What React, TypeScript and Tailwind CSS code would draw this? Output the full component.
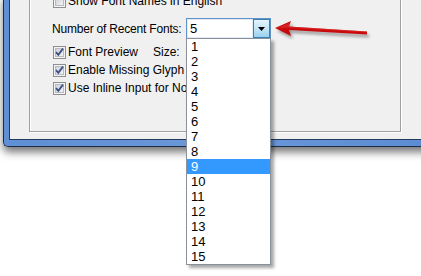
import React from "react";

const FONT = "font-['Liberation_Sans',Arial,sans-serif]";

function CheckBox({ checked }: { checked?: boolean }) {
    return (
        <svg width="13" height="13" viewBox="0 0 13 13" className="shrink-0">
            <defs>
                <linearGradient id={checked ? "cbg1" : "cbg0"} x1="0" y1="0" x2="1" y2="1">
                    <stop offset="0" stopColor="#cbcfd5" />
                    <stop offset="1" stopColor="#f6f6f6" />
                </linearGradient>
            </defs>
            <rect x="0.5" y="0.5" width="12" height="12" fill="#f4f4f4" stroke="#8e8f8f" />
            <rect x="2.5" y="2.5" width="8" height="8" fill={`url(#${checked ? "cbg1" : "cbg0"})`} stroke="#b8bcc2" />
            {checked && (
                <path d="M3 6.2 L5.3 8.8 L10 2.6" fill="none" stroke="#3a4f86" strokeWidth="1.8" />
            )}
        </svg>
    );
}

// rows are clipped where the open list covers them (x = 186)
function CheckRow({ label, checked, className }: { label: string; checked?: boolean; className?: string }) {
    return (
        <div className={`flex items-center w-[133px] h-[13px] overflow-hidden whitespace-nowrap ${className ?? ""}`}>
            <CheckBox checked={checked} />
            <span className="ml-[2px] text-[12px] leading-[13px] text-black">{label}</span>
        </div>
    );
}

const ITEMS = Array.from({ length: 15 }, (_, i) => i + 1);

export default function App() {
    return (
        <div className={`relative w-[421px] h-[276px] bg-white overflow-hidden ${FONT}`}>
            {/* Dialog window (bottom-left corner visible) */}
            <div className="ml-[3px] w-[440px] h-[152px] border-l border-b border-[#1c2d4a] bg-gradient-to-r from-[#5f8fd4] via-[#6b98d8] to-[#5a8bd2] rounded-bl-[5px] pl-[5px] pb-[6px] shadow-[0_5px_9px_rgba(0,0,0,0.55)]">
                <div className="h-full border-l border-b border-[#223a5e] bg-[#f0f0f0] pl-[19px]">
                    {/* Group box */}
                    <div className="w-[372px] h-[137px] border-l border-r border-b border-[#a0a0a0] shadow-[1px_1px_0_#ffffff,inset_1px_0_0_#ffffff] pl-[23px]">
                        <div className="flex items-center h-[13px] mt-[-5px] whitespace-nowrap">
                            <CheckBox />
                            <span className="ml-[2px] text-[12px] leading-[13px] text-black">Show Font Names in English</span>
                        </div>

                        <div className="flex items-center mt-[10px] h-[21px]">
                            <span className="ml-[-1px] w-[134px] text-[12px] tracking-[-0.2px] text-black whitespace-nowrap">
                                Number of Recent Fonts:
                            </span>
                            {/* Combo box */}
                            <div className="relative w-[85px] h-[21px] border border-[#5f93c6] bg-white flex">
                                <div className="flex-1 border border-[#e3ecf5] pl-[2px] text-[13px] leading-[17px] text-black">
                                    5
                                </div>
                                <div className="w-[17px] h-[19px] border border-[#3c7fb1] bg-gradient-to-b from-[#e5f4fc] via-[#c4e5f6] to-[#98d1ef] flex items-center justify-center">
                                    <svg width="7" height="4" viewBox="0 0 7 4">
                                        <path d="M0 0 H7 L3.5 4 Z" fill="#000" />
                                    </svg>
                                </div>

                                {/* Open dropdown list */}
                                <div className="absolute left-[-1px] top-[19px] w-[85px] h-[227px] border border-[#8a919c] bg-white z-10 shadow-[3px_3px_3px_rgba(0,0,0,0.35)]">
                                    {ITEMS.map((n) => (
                                        <div
                                            key={n}
                                            className={`h-[15px] pl-[4px] text-[13px] leading-[15px] ${
                                                n === 9 ? "bg-[#3399ff] text-white" : "text-black"
                                            }`}
                                        >
                                            {n}
                                        </div>
                                    ))}
                                </div>
                            </div>
                        </div>

                        <div className="flex items-center mt-[7px]">
                            <div className="w-[100px]">
                                <CheckRow label="Font Preview" checked />
                            </div>
                            <span className="text-[12px] leading-[13px] text-black">Size:</span>
                        </div>
                        <CheckRow label="Enable Missing Glyph Protection" checked className="mt-[5px]" />
                        <CheckRow label="Use Inline Input for Non-Latin Text" checked className="mt-[5px]" />
                    </div>
                </div>
            </div>

            {/* Red callout arrow */}
            <svg className="absolute left-[270px] top-[15px]" width="110" height="30" viewBox="0 0 110 30">
                <defs>
                    <filter id="ash" x="-20%" y="-50%" width="140%" height="200%">
                        <feGaussianBlur stdDeviation="1.6" />
                    </filter>
                </defs>
                <g transform="translate(2 3)" fill="#000" opacity="0.35" filter="url(#ash)">
                    <path d="M5 13 L21 6 L19 11.5 L97 16.5 L97 19.5 L19 15 L21 21 Z" />
                </g>
                <path d="M5 13 L21 6 L19 11.5 L97 16.5 L97 19.5 L19 15 L21 21 Z" fill="#c80a0a" />
                <path d="M7 13 L20 7.5 L19 11.5 L97 16.5 L97 17.5 L19 12.8 Z" fill="#e23a3a" opacity="0.5" />
            </svg>
        </div>
    );
}
